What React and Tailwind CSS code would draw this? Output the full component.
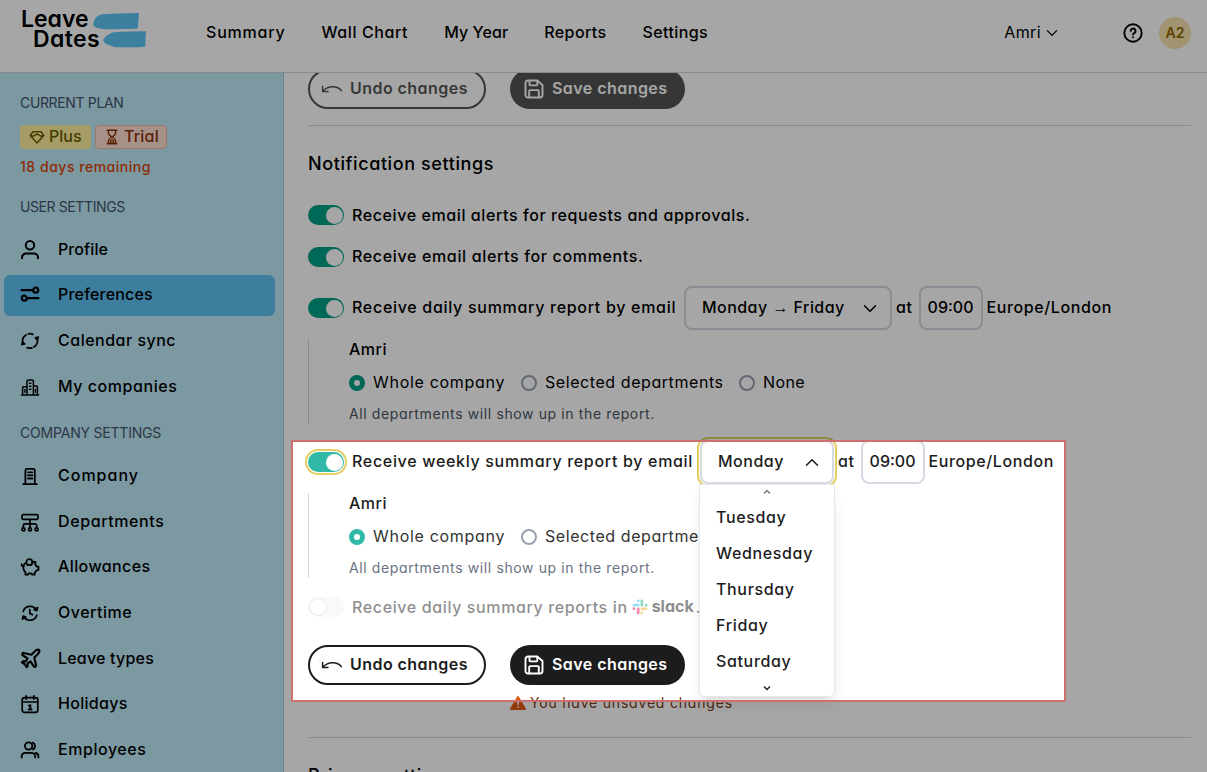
// src/App.jsx

import { Plane } from 'lucide-react'

/* ---------- ICONS ---------- */

function Icon({ children, className = 'w-5 h-5', width = 1.8 }) {
  return (
    <svg
      viewBox="0 0 20 20"
      className={`shrink-0 overflow-visible ${className}`}
      fill="none"
      stroke="currentColor"
      strokeWidth={width}
      strokeLinecap="round"
      strokeLinejoin="round"
    >
      {children}
    </svg>
  )
}

const ProfileIcon = () => (
  <Icon width={2}>
    <circle cx="10" cy="5.3" r="4.2" />
    <path d="M2 18.3v-.8a4 4 0 0 1 4-4h8a4 4 0 0 1 4 4v.8" />
  </Icon>
)

const PreferencesIcon = () => (
  <Icon width={2.2}>
    <path d="M1.6 5.2h11.2M18.4 13.2H7.2" />
    <circle cx="15.7" cy="5.2" r="2.5" />
    <circle cx="4.3" cy="13.2" r="2.5" />
  </Icon>
)

const SyncIcon = () => (
  <Icon>
    <path d="M2.9 12.4A7.3 7.3 0 0 1 6 4M8.200 2.900a7.300 7.300 0 0 1 4.600.4M17.100 7.400A7.300 7.300 0 0 1 14 16M11.800 17a7.300 7.300 0 0 1-4.600-.4" />
    <path d="M1.800 13.700l2.800-.7-1.900-1.800zM18.200 6.100l-2.800.7 1.900 1.800z" fill="currentColor" />
  </Icon>
)

const CompaniesIcon = () => (
  <Icon width={1.5}>
    <path d="M1.5 18.1h17M7 18V4.6A1.6 1.6 0 0 1 8.6 3h3.2a1.6 1.6 0 0 1 1.6 1.6V18M7 9.7H3.6c-.6 0-1 .4-1 1V18M13.4 9h3c.6 0 1 .4 1 1v8" />
    <path d="M9.5 6.2h1.4M9.5 9.2h1.4M9.5 12.2h1.4M5 12.6v2.6M15.4 12.6v2.6" />
  </Icon>
)

const CompanyIcon = () => (
  <Icon>
    <path d="M3.2 18.2h13.6M5.4 18V4.4a1.5 1.5 0 0 1 1.5-1.5h6.4a1.5 1.5 0 0 1 1.5 1.5V18" />
    <path d="M8 6.3h4.3M8 9.4h4.3M8 12.5h4.3" />
  </Icon>
)

const DepartmentsIcon = () => (
  <Icon width={1.7}>
    <rect x="2" y="2.7" width="16" height="4.6" rx="1.2" />
    <path d="M10 7.5v8.2M3.4 15.7v-2.4a1.5 1.5 0 0 1 1.5-1.5h10.2a1.5 1.5 0 0 1 1.5 1.5v2.4" />
    <circle cx="3.4" cy="17.4" r="1.5" />
    <circle cx="10" cy="17.4" r="1.5" />
    <circle cx="16.6" cy="17.4" r="1.5" />
  </Icon>
)

const AllowancesIcon = () => (
  <Icon>
    <circle cx="9.3" cy="5.2" r="3" />
    <path d="M12.4 5.9c1-.9 2.2-1.3 3-1.1l-.3 2.4c.8.7 1.3 1.5 1.6 2.4h1.8v3.2l-1.9.5c-.5 1-1.1 1.6-1.9 2.1v2.2h-2.6l-.6-1.3H8.6L8 17.6H5.4v-2.5a6 6 0 0 1-.6-8.6" />
    <path d="M1.6 7.2c0 1.6.8 2.2 2.1 2.2" />
  </Icon>
)

const OvertimeIcon = () => (
  <Icon width={1.7}>
    <path d="M3.2 8.4a7.2 7.2 0 0 1 13-1.6M16.8 12.2a7.2 7.2 0 0 1-13 1.6" />
    <path d="M17.6 4.6l-.8 3-2.6-1zM2.4 16l.8-3 2.6 1z" fill="currentColor" />
    <path d="M9.8 6.6v3.9l2.6 1.1" />
  </Icon>
)

const HolidaysIcon = () => (
  <Icon width={1.7}>
    <rect x="2.2" y="3.6" width="15.6" height="14.8" rx="2.4" />
    <path d="M2.4 8h15.2M6.2 1.8v3.4M13.8 1.8v3.4" />
    <path d="M8.800 11.600l1.500-.4v4.200M8.700 15.500h2.800" strokeWidth="2" />
  </Icon>
)

const EmployeesIcon = () => (
  <Icon>
    <circle cx="8.6" cy="6" r="3.7" />
    <path d="M1.6 17.6v-1a3.8 3.8 0 0 1 3.8-3.8h6a3.8 3.8 0 0 1 3.8 3.8v1M12.8 2.6a3.7 3.7 0 0 1 0 6.8M15.6 12.9a3.6 3.6 0 0 1 2.8 3.6v1.1" />
  </Icon>
)

const UndoIcon = () => (
  <svg viewBox="0 0 20 10" className="w-5 h-2.5 shrink-0 overflow-visible" fill="none" stroke="currentColor" strokeWidth="1.5" strokeLinecap="round" strokeLinejoin="round">
    <path d="M.6 2.4v5h5.4M1 7C6 1.600 15 1 19.400 6.600" />
  </svg>
)

const SaveIcon = () => (
  <Icon width={1.9}>
    <path d="M4 1.500h9.200l5.300 4.500v10a2.500 2.500 0 0 1-2.500 2.500H4A2.500 2.500 0 0 1 1.500 16V4A2.500 2.500 0 0 1 4 1.500z" />
    <path d="M5.500 1.800v3.600a1 1 0 0 0 1 1h5.800a1 1 0 0 0 1-1V1.800M5.200 18.300v-6.200a1 1 0 0 1 1-1h7.600a1 1 0 0 1 1 1v6.200" />
  </Icon>
)

const Chevron = ({ up, className = 'w-3 h-[7px]' }) => (
  <svg viewBox="0 0 12 7" className={`shrink-0 overflow-visible ${className}`} fill="none" stroke="currentColor" strokeWidth="1.5" strokeLinecap="round" strokeLinejoin="round">
    <path d={up ? 'M.5 6.300L6 .7l5.500 5.600' : 'M.5.7L6 6.300 11.500.7'} />
  </svg>
)

const SmallChevron = ({ up, className }) => (
  <svg viewBox="0 0 6 4" className={`w-1.5 h-1 shrink-0 overflow-visible ${className}`} fill="none" stroke="currentColor" strokeWidth="1.4">
    <path d={up ? 'M0 3.500l3-3 3 3' : 'M0 .5l3 3 3-3'} />
  </svg>
)

const SlackMark = () => (
  <svg viewBox="0 0 16 16" className="w-4 h-4 shrink-0" strokeWidth="2.800" strokeLinecap="round">
    <path d="M6.200 1.900h.1M1.900 6.200h4.400" stroke="#36c5f0" />
    <path d="M14.100 6.200v.1M9.800 1.900v4.400" stroke="#2eb67d" />
    <path d="M9.800 14.100h-.1M14.100 9.800H9.800" stroke="#ecb22e" />
    <path d="M1.900 9.800v-.1M6.200 14.100V9.800" stroke="#e01e5a" />
  </svg>
)

/* ---------- SMALL PARTS ---------- */

function Toggle({ focus, disabled }) {
  if (disabled) {
    return (
      <span className="w-9 h-5 rounded-full bg-gray-100 flex items-center pl-px shrink-0">
        <span className="w-[18px] h-[18px] rounded-full bg-white border border-gray-300" />
      </span>
    )
  }
  return (
    <span
      className={`w-9 h-5 rounded-full flex items-center justify-end pr-px shrink-0 ${
        focus ? 'bg-[#31b9a8] ring-2 ring-[#e5cf63] ring-offset-1' : 'bg-[#00a085]'
      }`}
    >
      <span className="w-[17px] h-[17px] rounded-full bg-white" />
    </span>
  )
}

function Radio({ checked, lit, label, className }) {
  const teal = lit ? 'border-[#31b9a8]' : 'border-[#00a085]'
  return (
    <label className={`flex items-center gap-2 ${lit ? 'text-[#333]' : 'text-black'} ${className}`}>
      <span className={`w-4 h-4 rounded-full shrink-0 ${checked ? `border-5 ${teal}` : 'border-2 border-gray-400'}`} />
      <span className="pb-0.5">{label}</span>
    </label>
  )
}

function ReportScope({ lit }) {
  return (
    <div className="h-[85px] border-l border-gray-300 pl-10 flex flex-col">
      <span className={`h-5 leading-5 font-medium tracking-[.5px] ${lit ? 'text-[#1c1c1c]' : 'text-black'}`}>Amri</span>
      <div className="flex h-[26px] mt-[11px]">
        <Radio checked lit={lit} label="Whole company" className="w-[172px] tracking-[.7px]" />
        <Radio lit={lit} label="Selected departments" className="w-[218px] tracking-[.57px]" />
        <Radio lit={lit} label="None" className="tracking-[.4px]" />
      </div>
      <span className={`text-sm leading-5 mt-2 tracking-[.62px] ${lit ? 'text-gray-500' : 'text-gray-600'}`}>
        All departments will show up in the report.
      </span>
    </div>
  )
}

function ActionButtons({ disabled }) {
  return (
    <div className={`flex gap-6 font-semibold tracking-[.45px] ${disabled ? 'opacity-75' : ''}`}>
      <button className="w-[178px] h-10 rounded-full border-2 border-[#1c1c1c] text-[#1c1c1c] flex items-center pl-3 gap-2">
        <UndoIcon />
        <span className="pb-0.5">Undo changes</span>
      </button>
      <button className="w-[175px] h-10 rounded-full bg-[#1c1c1c] text-white flex items-center pl-[14px] gap-2">
        <SaveIcon />
        <span className="pb-0.5">Save changes</span>
      </button>
    </div>
  )
}

function SendTime() {
  return (
    <>
      <span className="ml-1 pb-0.5">at</span>
      <span className="w-16 h-11 border-2 border-[#d5dbe3] rounded-lg flex items-center justify-center ml-1.5 mr-1 pb-0.5 tracking-normal">
        09:00
      </span>
      <span className="pb-0.5">Europe/London</span>
    </>
  )
}

/* ---------- LAYOUT ---------- */

function Header() {
  return (
    <header className="h-[73px] shrink-0 border-b border-gray-300 flex font-medium text-black">
      <div className="w-[206px] pt-[9px] pl-[21px] text-[23px] leading-5 font-semibold">
        <div className="flex h-5 tracking-[0px]">
          Leave
          <svg viewBox="0 0 46 17" className="w-[46px] h-[17px] ml-1 mt-1" fill="#5cc3f5">
            <path d="M6 2.200C10 .9 18 .8 26 .6L46 0l-1.200 15.400c-9 .9-22 .5-33 .8-4-.2-6-1.200-9-1.700C.5 13.500-.2 12 .6 9.500 1.500 6 3 3.500 6 2.200z" />
          </svg>
        </div>
        <div className="flex h-5 pl-3 tracking-[.4px]">
          Dates
          <svg viewBox="0 0 43 17" className="w-[43px] h-[17px] ml-[3px] mt-0.5" fill="#5cc3f5">
            <path d="M10 1.500C14 .8 20 .8 26 .6L43 .2l-.8 15.600c-8 .8-18 .4-28 .5-4-.3-6-1.800-9-2.600C2 12.500 0 11 .3 8.500 2 7 3 3.500 10 1.500z" />
          </svg>
        </div>
      </div>
      <nav className="flex h-[63px] items-center gap-9">
        <a className="tracking-[.8px]">Summary</a>
        <a className="tracking-[.6px]">Wall Chart</a>
        <a className="tracking-[.1px]">My Year</a>
        <a className="tracking-[.4px]">Reports</a>
        <a className="tracking-[.4px]">Settings</a>
      </nav>
      <div className="ml-auto h-[65px] flex items-center pr-4">
        <span className="font-normal tracking-[.4px] pb-0.5">Amri</span>
        <Chevron className="w-2.5 h-1.5 ml-1.5 mr-[66px]" />
        <Icon width={1.9}>
          <circle cx="10" cy="10" r="8.700" />
          <path d="M7.700 7.900a2.400 2.400 0 1 1 3.500 2.200c-.8.400-1.200.8-1.200 1.500M10 14.200v.1" />
        </Icon>
        <span className="ml-4 w-8 h-8 rounded-full bg-[#f7e3ae] text-[#8b6400] text-sm font-semibold flex items-center justify-center">
          A2
        </span>
      </div>
    </header>
  )
}

function NavItem({ icon, label, active, className }) {
  return (
    <a className="h-[45.6px] flex items-center">
      <span className={`flex-1 h-[41px] rounded-md flex items-center gap-[18px] pl-4 ${active ? 'bg-[#5ec2f3]' : ''}`}>
        {icon}
        <span className={`pb-0.5 ${className}`}>{label}</span>
      </span>
    </a>
  )
}

function Sidebar() {
  return (
    <aside className="w-[284px] shrink-0 bg-[#bfeaf8] border-r border-[#a9c9d6] pt-5 font-medium text-black">
      <div className="pl-5 text-sm">
        <p className="h-5 leading-5 font-normal text-slate-600 tracking-[-.35px]">CURRENT PLAN</p>
        <div className="flex gap-1 mt-3 text-base leading-[22px]">
          <span className="h-6 w-[71px] rounded bg-[#fff09d] text-[#6a5d00] flex items-center gap-1 pl-[9px]">
            <Icon className="w-4 h-4">
              <path d="M5 3.500h10l3.500 4.500L10 17.500 1.500 8zM1.500 8l4 1L10 6l4.500 3 4-1" />
            </Icon>
            <span className="pb-0.5">Plus</span>
          </span>
          <span className="h-6 w-[72px] rounded bg-[#ffdfd3] border border-[#eeb8a6] text-[#8b3208] flex items-center gap-1 pl-2">
            <Icon className="w-4 h-4">
              <path d="M4 1.500h12M4 18.500h12M5.500 1.500v3.500c0 2 2 3.500 4.500 5 2.500-1.500 4.500-3 4.500-5V1.500M5.500 18.500V15c0-2 2-3.500 4.500-5 2.500 1.500 4.500 3 4.500 5v3.500M8 15.500l2-2 2 2v2H8z" />
            </Icon>
            <span className="pb-0.5 tracking-[.2px]">Trial</span>
          </span>
        </div>
        <p className="h-5 leading-5 mt-2 text-[#d94407] tracking-[.53px]">18 days remaining</p>
        <p className="h-5 leading-5 mt-5 font-normal text-slate-600 tracking-[-.4px]">USER SETTINGS</p>
      </div>
      <nav className="pl-1 pr-2 mt-2.5">
        <NavItem icon={<ProfileIcon />} label="Profile" className="tracking-[.1px]" />
        <NavItem icon={<PreferencesIcon />} label="Preferences" className="tracking-[.2px]" active />
        <NavItem icon={<SyncIcon />} label="Calendar sync" className="tracking-[.5px]" />
        <NavItem icon={<CompaniesIcon />} label="My companies" className="tracking-[.55px]" />
      </nav>
      <p className="pl-5 text-sm h-5 leading-5 mt-3.5 font-normal text-slate-600 tracking-[-.2px]">COMPANY SETTINGS</p>
      <nav className="pl-1 pr-2 mt-2.5">
        <NavItem icon={<CompanyIcon />} label="Company" className="tracking-[1px]" />
        <NavItem icon={<DepartmentsIcon />} label="Departments" className="tracking-[.6px]" />
        <NavItem icon={<AllowancesIcon />} label="Allowances" className="tracking-[.4px]" />
        <NavItem icon={<OvertimeIcon />} label="Overtime" className="tracking-[.5px]" />
        <NavItem
          icon={<Plane className="w-[23px] h-[23px] -ml-px -mr-0.5" strokeWidth={2.2} />}
          label="Leave types"
          className="tracking-[.2px]"
        />
        <NavItem icon={<HolidaysIcon />} label="Holidays" className="tracking-[.3px]" />
        <NavItem icon={<EmployeesIcon />} label="Employees" className="tracking-[.55px]" />
      </nav>
    </aside>
  )
}

function DayMenu() {
  const days = ['Tuesday', 'Wednesday', 'Thursday', 'Friday', 'Saturday']
  return (
    <div className="absolute z-10 top-[42px] -left-[3px] w-[136px] h-[213px] bg-white border border-gray-200 rounded-b-md shadow-lg flex flex-col items-center">
      <SmallChevron up className="mt-[5px] mb-[5px] text-gray-500" />
      <ul className="w-full pl-4 tracking-[.65px]">
        {days.map((day) => (
          <li key={day} className="h-9 leading-9">{day}</li>
        ))}
      </ul>
      <SmallChevron className="mt-[7px]" />
    </div>
  )
}

function Main() {
  return (
    <main className="flex-1 overflow-hidden pl-6 pr-4">
      <div className="-mt-1">
        <ActionButtons disabled />
      </div>
      <hr className="mt-4 border-gray-300" />

      {/* NOTIFICATIONS */}
      <h2 className="mt-6 h-7 leading-7 text-lg font-medium text-black tracking-[.6px]">Notification settings</h2>
      <div className="font-medium text-black">
        <div className="mt-[27px] h-5 flex items-center gap-2 tracking-[.59px]">
          <Toggle /> Receive email alerts for requests and approvals.
        </div>
        <div className="mt-[22px] h-5 flex items-center gap-2 tracking-[.65px]">
          <Toggle />
          <span className="pb-0.5">Receive email alerts for comments.</span>
        </div>
        <div className="mt-[19px] h-11 flex items-center tracking-[.6px]">
          <Toggle />
          <span className="w-[332px] ml-2 pb-0.5 tracking-[.7px]">Receive daily summary report by email</span>
          <span className="w-52 h-11 border-2 border-[#d5dbe3] rounded-lg flex items-center justify-between pl-4 pr-3.5">
            <span className="pb-0.5 tracking-[.45px]">
              Monday<span className="mx-[5px] tracking-normal font-normal font-['Liberation_Sans',sans-serif]">→</span>Friday
            </span>
            <Chevron />
          </span>
          <SendTime />
        </div>
      </div>
      <div className="mt-[9px]">
        <ReportScope />
      </div>

      {/* WEEKLY REPORT */}
      <div className="mt-4 h-11 flex items-center font-medium text-[#1c1c1c] tracking-[.6px]">
        <Toggle focus />
        <span className="w-[348px] ml-2 pb-0.5 tracking-[.68px]">Receive weekly summary report by email</span>
        <span className="relative w-[134px] h-11 border-2 border-[#d5dbe3] rounded-lg ring-2 ring-[#e5cf63] ring-offset-1 flex items-center justify-between pl-4 pr-3.5">
          <span className="pb-0.5 tracking-[.5px]">Monday</span>
          <Chevron up />
          <DayMenu />
        </span>
        <SendTime />
      </div>
      <div className="mt-[9px]">
        <ReportScope lit />
      </div>
      <div className="mt-[19px] h-5 flex items-center font-medium text-[#1c1c1c] opacity-50">
        <Toggle disabled />
        <span className="ml-2 mr-1 tracking-[.62px]">Receive daily summary reports in</span>
        <SlackMark />
        <span className="font-bold ml-1 mr-0.5 pb-0.5">slack</span>.
      </div>
      <div className="mt-7">
        <ActionButtons />
      </div>
      <p className="mt-2 ml-[202px] h-5 text-sm flex items-center gap-1 text-[#7a3a14] tracking-[.8px]">
        <svg viewBox="0 0 16 14" className="w-4 h-3.5 overflow-visible">
          <path d="M8 1l7 12H1z" fill="#e05a10" stroke="#e05a10" strokeWidth="2" strokeLinejoin="round" />
          <path d="M8 5v3.600M8 11v.2" stroke="#fff" strokeWidth="1.600" strokeLinecap="round" />
        </svg>
        You have unsaved changes
      </p>
      <hr className="mt-6 border-gray-300" />
      <h2 className="mt-6 h-7 leading-7 text-lg font-medium text-black tracking-[.6px]">Privacy settings</h2>
    </main>
  )
}

export default function App() {
  return (
    <div className="relative w-full h-[772px] overflow-hidden bg-white flex flex-col text-base font-[Inter,sans-serif] [font-feature-settings:'cv11']">
      <Header />
      <div className="flex flex-1 min-h-0">
        <Sidebar />
        <Main />
      </div>

      {/* SPOTLIGHT */}
      <div className="absolute z-20 left-[291px] top-[440px] w-[775px] h-[262px] border-2 border-[#cc6f6f] shadow-[0_0_0_1300px_rgba(0,0,0,0.35)] pointer-events-none" />
    </div>
  )
}
